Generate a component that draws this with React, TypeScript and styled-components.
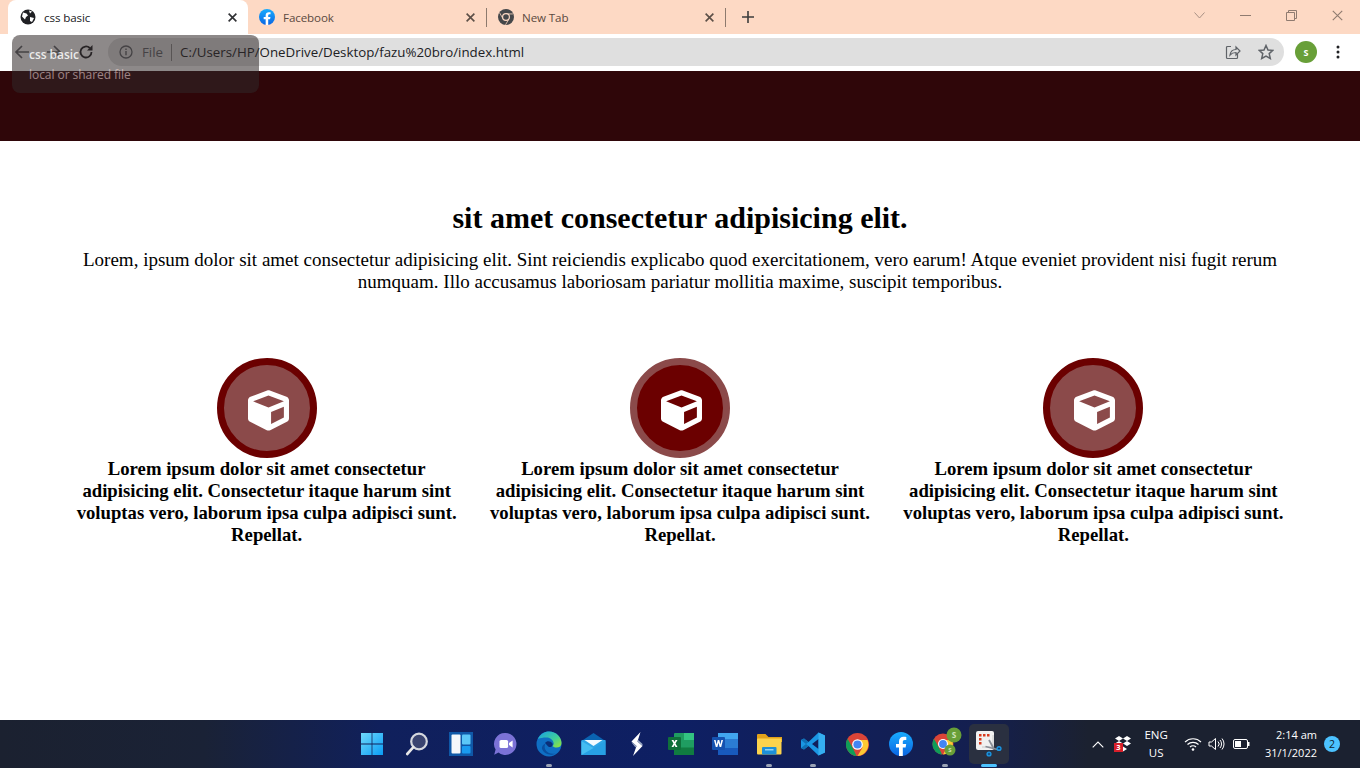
import React from "react";
import styled, { createGlobalStyle } from "styled-components";
import { FaCube } from "react-icons/fa";

const GlobalStyle = createGlobalStyle`
  html, body { margin: 0; padding: 0; height: 100%; overflow: hidden; background: #fff; }
  #root { height: 100%; }
  * { box-sizing: border-box; }
`;

const UI_FONT = `"Open Sans", "Noto Sans", sans-serif`;

const Screen = styled.div`
  position: relative;
  width: 1360px;
  height: 768px;
  display: flex;
  flex-direction: column;
  overflow: hidden;
  font-family: "Liberation Serif", serif;
`;

/* browser chrome */
const TabStrip = styled.div`
  height: 34px;
  flex: none;
  background: #fdd9c4;
  display: flex;
  align-items: flex-end;
  padding-left: 8px;
`;

const Tab = styled.div<{ $active?: boolean }>`
  width: 240px;
  height: 34px;
  flex: none;
  display: flex;
  align-items: center;
  padding: ${(p) => (p.$active ? "0 11px 0 12px" : "0 12px 0 11px")};
  gap: 8px;
  font: 11.6px ${UI_FONT};
  letter-spacing: -0.1px;
  color: ${(p) => (p.$active ? "#202124" : "#5b4a41")};
  background: ${(p) => (p.$active ? "#fff" : "transparent")};
  border-radius: 8px 8px 0 0;
`;

const TabWithDivider = styled(Tab)`
  width: 239px;
  position: relative;
  &::after {
    content: "";
    position: absolute;
    right: 0;
    top: 8px;
    height: 19px;
    width: 1px;
    background: #8d7a6e;
  }
`;

const TabTitle = styled.span`
  flex: 1;
  white-space: nowrap;
`;

const NewTab = styled.div`
  width: 44px;
  height: 34px;
  display: flex;
  align-items: center;
  justify-content: center;
`;

const WindowControls = styled.div`
  margin-left: auto;
  height: 34px;
  display: flex;
  align-items: center;
`;

const WindowButton = styled.div`
  width: 46px;
  height: 30px;
  margin-bottom: 4px;
  display: flex;
  align-items: center;
  justify-content: center;
`;

const Toolbar = styled.div`
  height: 37px;
  flex: none;
  background: #fff;
  display: flex;
  align-items: flex-start;
  padding: 4px 0 0 0;
`;

const NavButtons = styled.div`
  width: 108px;
  height: 28px;
  flex: none;
  display: flex;
  align-items: center;
  padding-left: 14px;
  gap: 16px;
`;

const Omnibox = styled.div`
  width: 1176px;
  height: 28px;
  flex: none;
  border-radius: 14px;
  background: #dfdfdf;
  display: flex;
  align-items: center;
  padding: 0 10px 0 11px;
  font: 13.3px ${UI_FONT};
  color: #202124;
`;

const SchemeLabel = styled.span`
  margin-left: 9px;
  padding-right: 8px;
  border-right: 1px solid #8a8a8a;
  line-height: 17px;
  color: #5f6368;
`;

const UrlText = styled.span`
  margin-left: 8px;
  flex: 1;
  white-space: nowrap;
`;

const OmniActions = styled.div`
  display: flex;
  align-items: center;
  gap: 17px;
`;

const ToolbarEnd = styled.div`
  flex: 1;
  height: 28px;
  display: flex;
  align-items: center;
  padding-left: 11px;
  gap: 19px;
`;

const Avatar = styled.div`
  width: 22px;
  height: 22px;
  border-radius: 50%;
  background: #689f38;
  color: #fff;
  font: 700 9px ${UI_FONT};
  display: flex;
  align-items: center;
  justify-content: center;
`;

const HoverCard = styled.div`
  position: absolute;
  left: 12px;
  top: 35px;
  width: 247px;
  height: 58px;
  border-radius: 8px;
  background: rgba(48, 40, 40, 0.55);
  padding: 10px 17px;
  font: 12px/20px ${UI_FONT};
  letter-spacing: -0.05px;
`;

const HoverTitle = styled.div`
  font-weight: 600;
  color: rgba(255, 255, 255, 0.85);
`;

const HoverSub = styled.div`
  color: rgba(255, 225, 225, 0.55);
`;

/* page */
const Hero = styled.div`
  height: 70px;
  flex: none;
  background: #2f0609;
`;

const Content = styled.main`
  flex: 1;
  min-height: 0;
  background: #fff;
  padding-top: 60px;
`;

const Intro = styled.section`
  width: 1240px;
  margin: 0 auto;
  text-align: center;
`;

const Heading = styled.h2`
  margin: 0;
  font-size: 30px;
  line-height: 34px;
  font-weight: 700;
  color: #000;
`;

const Lead = styled.p`
  margin: 14px 0 0;
  font-size: 19px;
  line-height: 22px;
  color: #000;
`;

const Features = styled.section`
  width: 1240px;
  margin: 65px auto 0;
  display: grid;
  grid-template-columns: repeat(3, 1fr);
`;

const Feature = styled.article`
  display: flex;
  flex-direction: column;
  align-items: center;
  padding: 0 15px;
`;

const IconRing = styled.div<{ $inverted?: boolean }>`
  width: 100px;
  height: 100px;
  border-radius: 50%;
  border: 7px solid ${(p) => (p.$inverted ? "#8b4a4a" : "#6b0000")};
  background: ${(p) => (p.$inverted ? "#6b0000" : "#8b4a4a")};
  color: #fff;
  display: flex;
  align-items: center;
  justify-content: center;
  font-size: 41px;
  svg { margin: 4px 0 0 3px; }
`;

const FeatureText = styled.p`
  margin: 0;
  text-align: center;
  font-size: 18.72px;
  line-height: 22px;
  font-weight: 700;
  color: #000;
`;

/* taskbar */
const Taskbar = styled.footer`
  height: 48px;
  flex: none;
  display: grid;
  grid-template-columns: 351px 660px 1fr;
  background: linear-gradient(90deg, #1b2130 0%, #1a2236 15%, #10205c 28%, #0e1f63 50%, #141f4f 72%, #1b2130 80%, #1b2130 100%);
`;

const TaskIcons = styled.div`
  grid-column: 2;
  display: grid;
  grid-template-columns: repeat(15, 44px);
`;

const TaskIcon = styled.div<{ $open?: boolean; $focused?: boolean }>`
  position: relative;
  height: 48px;
  display: flex;
  align-items: center;
  justify-content: center;
  ${(p) =>
    p.$focused &&
    `&::before {
      content: "";
      position: absolute;
      inset: 4px 2px;
      background: #2a3040;
      border-radius: 5px;
    }`}
  svg { position: relative; }
  &::after {
    content: "";
    display: ${(p) => (p.$open || p.$focused ? "block" : "none")};
    position: absolute;
    bottom: 1px;
    left: 50%;
    transform: translateX(-50%);
    width: ${(p) => (p.$focused ? "16px" : "6px")};
    height: 3px;
    border-radius: 2px;
    background: ${(p) => (p.$focused ? "#4cc2ff" : "#9aa3b5")};
  }
`;

const Tray = styled.div`
  grid-column: 3;
  display: flex;
  align-items: center;
  justify-content: flex-end;
  color: #fff;
  font: 11.5px/18px ${UI_FONT};
  padding-right: 20px;
`;

const TrayIcon = styled.div<{ $gap: number; $lead?: number }>`
  display: flex;
  margin-left: ${(p) => p.$lead ?? 0}px;
  margin-right: ${(p) => p.$gap}px;
`;

const LangStack = styled.div`
  text-align: center;
  white-space: nowrap;
`;

const Clock = styled.div`
  text-align: right;
  white-space: nowrap;
  font-size: 11px;
`;

const Badge = styled.div`
  margin-left: 7px;
  width: 16px;
  height: 16px;
  border-radius: 50%;
  background: #4cc2ff;
  color: #10202c;
  font: 10.5px/16px ${UI_FONT};
  text-align: center;
`;

/* icons */
const GlobeIcon = () => (
  <svg width="16" height="16" viewBox="0 0 16 16">
    <circle cx="8" cy="8" r="7.5" fill="#202124" />
    <path d="M3 3.5l3.5 1 1.5 2-2 1.5-1 2.5-3-3zM9 1.5l3 1-2 2zM10 8l4 1-2 4-2-1z" fill="#fff" />
  </svg>
);

const FacebookIcon = ({ size = 16 }: { size?: number }) => (
  <svg width={size} height={size} viewBox="0 0 24 24">
    <defs>
      <linearGradient id={`fb${size}`} x1="0" y1="0" x2="0" y2="1">
        <stop offset="0" stopColor="#18acfe" />
        <stop offset="1" stopColor="#0b65e3" />
      </linearGradient>
    </defs>
    <circle cx="12" cy="12" r="12" fill={`url(#fb${size})`} />
    <path d="M16.6 15.4l.6-3.4h-3.4V9.8c0-1 .5-1.9 2-1.9h1.5V5c0 0-1.4-.2-2.7-.2-2.8 0-4.6 1.7-4.6 4.7V12h-3v3.4h3V24h3.8v-8.6z" fill="#fff" />
  </svg>
);

const ChromeIcon = ({ size = 16 }: { size?: number }) => (
  <svg width={size} height={size} viewBox="0 0 24 24">
    <circle cx="12" cy="12" r="12" fill="#db4437" />
    <path d="M12 24A12 12 0 0 1 1.6 6l5.2 9 4.2 9z" fill="#0f9d58" />
    <path d="M12 7.4h10.4A12 12 0 0 1 12 24l5.2-9z" fill="#fcc934" />
    <circle cx="12" cy="12" r="5.6" fill="#fff" />
    <circle cx="12" cy="12" r="4.3" fill="#4285f4" />
  </svg>
);

const ChromeMonoIcon = () => (
  <svg width="16" height="16" viewBox="0 0 24 24">
    <circle cx="12" cy="12" r="12" fill="#45474a" />
    <path d="M12 7.400h10.400M7.500 14.600L2.300 5.600M16.500 14.600L11.300 23.700" stroke="#fdd9c4" strokeWidth="1.200" />
    <circle cx="12" cy="12" r="6" fill="#fdd9c4" />
    <circle cx="12" cy="12" r="4.200" fill="#45474a" />
  </svg>
);

const CloseX = ({ color = "#3c3c3c", size = 10, w = 1.6 }: { color?: string; size?: number; w?: number }) => (
  <svg width={size} height={size} viewBox="0 0 10 10">
    <path d="M.7.7l8.6 8.6M9.3.7L.7 9.3" stroke={color} strokeWidth={w} fill="none" />
  </svg>
);

const StartIcon = () => (
  <svg width="24" height="24" viewBox="0 0 24 24">
    <defs>
      <linearGradient id="st" x1="0" y1="0" x2="1" y2="1">
        <stop offset="0" stopColor="#6fd9fb" />
        <stop offset="1" stopColor="#0a9cf5" />
      </linearGradient>
    </defs>
    <path d="M0 1h10.6v10.6H0zM11.400 1H22v10.6H11.400zM0 12.400h10.6V23H0zM11.400 12.400H22V23H11.400z" fill="url(#st)" />
  </svg>
);

const SearchIcon = () => (
  <svg width="24" height="24" viewBox="0 0 24 24">
    <circle cx="14" cy="9.5" r="7.8" fill="#3a4470" stroke="#d5d8de" strokeWidth="2.2" />
    <path d="M8.4 15.2L2.2 22" stroke="#e8e8e8" strokeWidth="2.6" strokeLinecap="round" />
  </svg>
);

const WidgetsIcon = () => (
  <svg width="24" height="24" viewBox="0 0 24 24">
    <rect width="24" height="24" fill="#0f58a8" />
    <rect x="2.5" y="2.5" width="9" height="19" rx="1" fill="#f4f7fb" />
    <rect x="13" y="2.5" width="8.5" height="10" rx="1" fill="#5cc8f8" />
    <rect x="13" y="14" width="8.5" height="7.5" rx="1" fill="#1a9bf0" />
  </svg>
);

const TeamsIcon = () => (
  <svg width="24" height="24" viewBox="0 0 24 24">
    <path d="M12.5 1a11 11 0 1 1-7 19.5L1.2 22.8l1.4-5.2A11 11 0 0 1 12.5 1z" fill="#7b72d6" />
    <rect x="6.5" y="8" width="8.6" height="8" rx="1.6" fill="#fff" />
    <path d="M16 11l3.6-2.4v6.8L16 13z" fill="#fff" />
  </svg>
);

const EdgeIcon = () => (
  <svg width="26" height="26" viewBox="0 0 26 26">
    <defs>
      <linearGradient id="eg" x1="0.2" y1="0" x2="1" y2="0.8">
        <stop offset="0" stopColor="#1fa8d8" />
        <stop offset="0.6" stopColor="#3fcf9a" />
        <stop offset="1" stopColor="#86e04a" />
      </linearGradient>
    </defs>
    <circle cx="13" cy="13" r="12.5" fill="#0f6fc4" />
    <path d="M2 8C4 3 8.500.5 13 .5c7 0 12.500 5.500 12.500 11.500 0 3-2 4.500-5 4.500-2 0-3.500-.6-4-1.500 1-1 1.500-2 1-3.500C16.500 8 13.500 6.500 10.500 6.500 7 6.500 4 7 2 8z" fill="url(#eg)" />
    <path d="M9 12c2-2.500 5.500-2 7.500.5.500 1.200 0 2.200-.8 3-1.500 1.200-3.500.3-4.200-.8C10.500 13.500 9.800 12.700 9 12z" fill="#0b2f78" />
    <path d="M6 18c1.500 3.500 6 6.500 11 5.500 1-.2 2-.6 2.500-1-4.500 1-9-.5-10.500-4.500-.5-1.500-.5-4 .5-5.500C7 13.500 5.500 15.500 6 18z" fill="#0a4fa0" />
  </svg>
);

const MailIcon = () => (
  <svg width="25" height="24" viewBox="0 0 25 24">
    <path d="M12.500 1L24.500 9H.5z" fill="#0a63b0" />
    <rect x=".5" y="8" width="24" height="15" fill="#2fa6e6" />
    <path d="M3.500 8h18l-9 6z" fill="#f2fbff" />
    <path d="M.5 23V9l12 7 12-7v14z" fill="#27a0e4" />
    <path d="M.5 9l12 7-12 7z" fill="#45bdf2" />
  </svg>
);

const BoltIcon = () => (
  <svg width="14" height="24" viewBox="0 0 14 24">
    <path d="M10.500 0L1.500 9.500l5 4.500L3 24l9.500-10-5-4.500z" fill="#fff" />
    <path d="M1.500 9.500l5 4.500-1 1.500L2 11zM12.500 14l-5-4.500.8-1.500L12.500 12z" fill="#9aa8c4" />
  </svg>
);

const ExcelIcon = () => (
  <svg width="26" height="24" viewBox="0 0 26 24">
    <rect x="6" y="1" width="20" height="22" rx="1" fill="#1f9d61" />
    <rect x="16" y="1" width="10" height="7" fill="#33c481" />
    <rect x="6" y="15.500" width="20" height="7.500" fill="#107c41" />
    <rect x="0" y="5" width="13" height="13" rx="1" fill="#0f703a" />
    <path d="M3.500 8h2l1 2 1-2h2l-2 3.500 2 3.500h-2l-1-2-1 2h-2l2-3.500z" fill="#fff" />
  </svg>
);

const WordIcon = () => (
  <svg width="26" height="24" viewBox="0 0 26 24">
    <rect x="6" y="1" width="20" height="22" rx="1" fill="#2b7cd3" />
    <rect x="6" y="1" width="20" height="6" fill="#41a5ee" />
    <rect x="6" y="16" width="20" height="7" fill="#185abd" />
    <rect x="0" y="5" width="13" height="13" rx="1" fill="#1552b0" />
    <path d="M2 8h1.600l1 4.400L5.700 8h1.600l1.100 4.400L9.400 8H11l-1.800 7H7.600L6.500 10.800 5.400 15H3.800z" fill="#fff" />
  </svg>
);

const FolderIcon = () => (
  <svg width="25" height="24" viewBox="0 0 25 24">
    <path d="M0 3a1 1 0 0 1 1-1h7.500l3 3H25v5H0z" fill="#e2a21a" />
    <rect x="0" y="6.500" width="24.500" height="16" rx="1" fill="#fcd34d" />
    <rect x="5" y="15" width="14.500" height="7.500" rx="1" fill="#1d8fd8" />
    <rect x="8" y="17" width="8.500" height="1.500" fill="#8fd3f4" />
  </svg>
);

const VsCodeIcon = () => (
  <svg width="24" height="24" viewBox="0 0 24 24">
    <path d="M17.500 0.500L24 3.500v17l-6.500 3-10-9.500-4.500 3.500L0 16V8l3-1.500L7.500 10zM17.500 7L11 12l6.500 5z" fill="#1a96e3" />
    <path d="M17.500 0.500L24 3.500v17l-6.500 3z" fill="#35aef0" />
    <path d="M0 8l3-1.500L7.500 10 5 12zM0 16l3 1.500 4.500-3.500-2.500-2z" fill="#0f6fb5" />
  </svg>
);

const SmallAvatar = ({ cx, cy, r }: { cx: number; cy: number; r: number }) => (
  <g>
    <circle cx={cx} cy={cy} r={r} fill="#689f38" />
    <text x={cx} y={cy + r * 0.42} fontSize={r * 1.1} fontWeight="700" textAnchor="middle" fill="#cfe3b8" fontFamily="Open Sans, sans-serif">
      S
    </text>
  </g>
);

const ChromeProfiles = () => (
  <svg width="34" height="34" viewBox="0 0 34 34">
    <g transform="translate(4.500 6.500)">
      <circle cx="10.500" cy="10.500" r="10.500" fill="#db4437" />
      <path d="M10.500 21A10.500 10.500 0 0 1 1.400 5.200l4.500 7.900L9.500 21z" fill="#0f9d58" />
      <path d="M10.500 6.500h9.100A10.500 10.500 0 0 1 10.500 21l4.500-7.900z" fill="#fcc934" />
      <circle cx="10.500" cy="10.500" r="5" fill="#fff" />
      <circle cx="10.500" cy="10.500" r="3.900" fill="#4285f4" />
    </g>
    <SmallAvatar cx={26} cy={8} r={7.500} />
    <SmallAvatar cx={22} cy={23} r={5.500} />
  </svg>
);

const SnipIcon = () => (
  <svg width="26" height="26" viewBox="0 0 26 26">
    <rect x="0" y="0" width="18" height="19" rx="2" fill="#f1f1f1" />
    <path d="M3 3h2.500v2.500H3zM7 3h2.500v2.500H7zM11 3h2.500v2.500H11zM3 7h2.500v2.500H3zM3 11h2.500v2.500H3z" fill="#d83b1e" />
    <path d="M17 4v12H6" stroke="#c8c8c8" strokeWidth="1" fill="none" />
    <path d="M13 9l5 9M9.500 15.500l12 3" stroke="#8a8f98" strokeWidth="1.800" fill="none" />
    <circle cx="23" cy="17.500" r="2.600" fill="#1a96e3" />
    <circle cx="13" cy="23" r="2.600" fill="#1a96e3" />
    <path d="M21.800 17.500h2.400M23 16.300v2.400M11.800 23h2.400M13 21.800v2.400" stroke="#0b2a55" strokeWidth=".7" />
  </svg>
);

const DropboxIcon = () => (
  <svg width="18" height="16" viewBox="0 0 18 16">
    <path d="M5 0l4 2.500-4 2.500-4-2.500zM13 0l4 2.500-4 2.500-4-2.500zM5 5l4 2.500L5 10 1 7.500zM13 5l4 2.500-4 2.500-4-2.500zM9 10.500l4 2.500-4 2.500L5 13z" fill="#fff" />
    <rect x="0" y="7" width="9" height="9" fill="#d81f2a" />
    <text x="4.500" y="14.300" fontSize="7.500" fontWeight="700" fill="#fff" textAnchor="middle" fontFamily="Open Sans, sans-serif">
      3
    </text>
  </svg>
);

const features = [{ inverted: false }, { inverted: true }, { inverted: false }];
const featureCopy =
  "Lorem ipsum dolor sit amet consectetur adipisicing elit. Consectetur itaque harum sint voluptas vero, laborum ipsa culpa adipisci sunt. Repellat.";

export default function App() {
  return (
    <>
      <GlobalStyle />
      <Screen>
        <TabStrip>
          <Tab $active>
            <GlobeIcon />
            <TabTitle>css basic</TabTitle>
            <CloseX size={9} w={1.8} color="#303134" />
          </Tab>
          <TabWithDivider>
            <FacebookIcon />
            <TabTitle>Facebook</TabTitle>
            <CloseX size={9} w={1.8} color="#5c4f47" />
          </TabWithDivider>
          <TabWithDivider>
            <ChromeMonoIcon />
            <TabTitle>New Tab</TabTitle>
            <CloseX size={9} w={1.8} color="#5c4f47" />
          </TabWithDivider>
          <NewTab>
            <svg width="12" height="12" viewBox="0 0 12 12">
              <path d="M6 0v12M0 6h12" stroke="#3c3c3c" strokeWidth="1.600" />
            </svg>
          </NewTab>
          <WindowControls>
            <WindowButton>
              <svg width="11" height="7" viewBox="0 0 11 7">
                <path d="M.5.5l5 5.500 5-5.500" stroke="#a89084" fill="none" />
              </svg>
            </WindowButton>
            <WindowButton>
              <svg width="11" height="1" viewBox="0 0 11 1">
                <path d="M0 .5h11" stroke="#8f7b70" />
              </svg>
            </WindowButton>
            <WindowButton>
              <svg width="11" height="11" viewBox="0 0 11 11">
                <path d="M.5 2.500h8v8h-8zM2.500 2.500v-2h8v8h-2" stroke="#8f7b70" fill="none" />
              </svg>
            </WindowButton>
            <WindowButton>
              <CloseX size={11} w={1} color="#8f7b70" />
            </WindowButton>
          </WindowControls>
        </TabStrip>

        <Toolbar>
          <NavButtons>
            <svg width="16" height="16" viewBox="0 0 16 16">
              <path d="M15 8H2M8 2L2 8l6 6" stroke="#5f6368" strokeWidth="1.700" fill="none" />
            </svg>
            <svg width="16" height="16" viewBox="0 0 16 16">
              <path d="M1 8h13M8 2l6 6-6 6" stroke="#5f6368" strokeWidth="1.700" fill="none" />
            </svg>
            <svg width="16" height="16" viewBox="0 0 16 16">
              <path d="M13.500 8a5.500 5.500 0 1 1-1.700-4" stroke="#202124" strokeWidth="1.800" fill="none" />
              <path d="M14.500 1v5.500H9z" fill="#202124" />
            </svg>
          </NavButtons>
          <Omnibox>
            <svg width="14" height="14" viewBox="0 0 14 14">
              <circle cx="7" cy="7" r="6" stroke="#5f6368" strokeWidth="1.300" fill="none" />
              <path d="M7 6v4.200M7 3.600v1.400" stroke="#5f6368" strokeWidth="1.400" />
            </svg>
            <SchemeLabel>File</SchemeLabel>
            <UrlText>C:/Users/HP/OneDrive/Desktop/fazu%20bro/index.html</UrlText>
            <OmniActions>
              <svg width="16" height="16" viewBox="0 0 16 16">
                <path d="M6 2.500H2.500a1 1 0 0 0-1 1v10a1 1 0 0 0 1 1h9a1 1 0 0 0 1-1V10" stroke="#5f6368" strokeWidth="1.200" fill="none" />
                <path d="M5 11c.5-3.500 3-5.500 6-5.500V3l4 4-4 4V8.500c-2.500 0-4.500.8-6 2.500z" stroke="#5f6368" strokeWidth="1.200" fill="none" />
              </svg>
              <svg width="16" height="16" viewBox="0 0 16 16">
                <path d="M8 1.500l2 4.500 4.800.4-3.600 3.200 1.100 4.800L8 12l-4.300 2.400 1.100-4.800L1.200 6.400 6 6z" stroke="#5f6368" strokeWidth="1.500" fill="none" />
              </svg>
            </OmniActions>
          </Omnibox>
          <ToolbarEnd>
            <Avatar>S</Avatar>
            <svg width="4" height="14" viewBox="0 0 4 14">
              <circle cx="2" cy="2" r="1.500" fill="#202124" />
              <circle cx="2" cy="7" r="1.500" fill="#202124" />
              <circle cx="2" cy="12" r="1.500" fill="#202124" />
            </svg>
          </ToolbarEnd>
        </Toolbar>

        <Hero />

        <Content>
          <Intro>
            <Heading>sit amet consectetur adipisicing elit.</Heading>
            <Lead>
              Lorem, ipsum dolor sit amet consectetur adipisicing elit. Sint reiciendis explicabo quod exercitationem, vero earum! Atque eveniet provident nisi fugit rerum numquam. Illo accusamus laboriosam pariatur mollitia maxime, suscipit temporibus.
            </Lead>
          </Intro>
          <Features>
            {features.map((feature, i) => (
              <Feature key={i}>
                <IconRing $inverted={feature.inverted}>
                  <FaCube />
                </IconRing>
                <FeatureText>{featureCopy}</FeatureText>
              </Feature>
            ))}
          </Features>
        </Content>

        <Taskbar>
          <TaskIcons>
            <TaskIcon><StartIcon /></TaskIcon>
            <TaskIcon><SearchIcon /></TaskIcon>
            <TaskIcon><WidgetsIcon /></TaskIcon>
            <TaskIcon><TeamsIcon /></TaskIcon>
            <TaskIcon $open><EdgeIcon /></TaskIcon>
            <TaskIcon><MailIcon /></TaskIcon>
            <TaskIcon><BoltIcon /></TaskIcon>
            <TaskIcon><ExcelIcon /></TaskIcon>
            <TaskIcon><WordIcon /></TaskIcon>
            <TaskIcon $open><FolderIcon /></TaskIcon>
            <TaskIcon $open><VsCodeIcon /></TaskIcon>
            <TaskIcon><ChromeIcon size={23} /></TaskIcon>
            <TaskIcon><FacebookIcon size={24} /></TaskIcon>
            <TaskIcon $open><ChromeProfiles /></TaskIcon>
            <TaskIcon $focused><SnipIcon /></TaskIcon>
          </TaskIcons>
          <Tray>
            <TrayIcon $gap={10}>
              <svg width="12" height="7" viewBox="0 0 12 7">
                <path d="M.7 6.300L6 1l5.300 5.300" stroke="#fff" strokeWidth="1.100" fill="none" />
              </svg>
            </TrayIcon>
            <TrayIcon $gap={12}><DropboxIcon /></TrayIcon>
            <LangStack>
              <div>ENG</div>
              <div>US</div>
            </LangStack>
            <TrayIcon $gap={6} $lead={16}>
              <svg width="18" height="14" viewBox="0 0 18 14">
                <path d="M1 5a11.500 11.500 0 0 1 16 0M3.500 7.500a8 8 0 0 1 11 0M6 10a4.300 4.300 0 0 1 6 0" stroke="#fff" strokeWidth="1.200" fill="none" />
                <circle cx="9" cy="12.500" r="1.300" fill="#fff" />
              </svg>
            </TrayIcon>
            <TrayIcon $gap={8}>
              <svg width="17" height="14" viewBox="0 0 17 14">
                <path d="M1 5h2.500L7.500 1.500v11L3.500 9H1z" stroke="#fff" fill="none" />
                <path d="M10 4.500a3.500 3.500 0 0 1 0 5M12 3a6 6 0 0 1 0 8M14 1.500a8.500 8.500 0 0 1 0 11" stroke="#fff" fill="none" />
              </svg>
            </TrayIcon>
            <TrayIcon $gap={15}>
              <svg width="17" height="10" viewBox="0 0 17 10">
                <rect x=".5" y=".5" width="14" height="9" rx="1.500" stroke="#fff" fill="none" />
                <rect x="2" y="2" width="6" height="6" fill="#fff" />
                <rect x="15" y="3" width="1.500" height="4" fill="#fff" />
              </svg>
            </TrayIcon>
            <Clock>
              <div>2:14 am</div>
              <div>31/1/2022</div>
            </Clock>
            <Badge>2</Badge>
          </Tray>
        </Taskbar>

        <HoverCard>
          <HoverTitle>css basic</HoverTitle>
          <HoverSub>local or shared file</HoverSub>
        </HoverCard>
      </Screen>
    </>
  );
}
